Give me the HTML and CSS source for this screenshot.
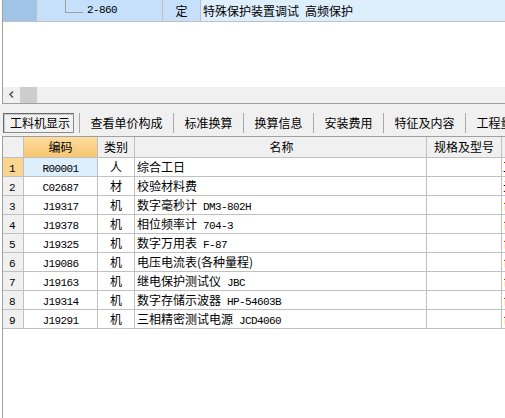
FILE: index.html
```html
<!DOCTYPE html>
<html lang="zh-CN">
<head>
<meta charset="utf-8">
<link rel="stylesheet" href="styles.css">
</head>
<body>
<div class="top">
  <div class="toprow">
    <div class="tc tc0"></div>
    <div class="tc tc1"><span class="tree"></span><span class="lat">2-860</span></div>
    <div class="tc tc2">定</div>
    <div class="tc tc3">特殊保护装置调试<span class="lat"> </span>高频保护</div>
  </div>
  <div class="hscroll">
    <span class="arrow"><svg width="17" height="16" viewBox="0 0 17 16"><polyline points="10,4.5 7,7.5 10,10.5" fill="none" stroke="#555" stroke-width="1.6"/></svg></span>
    <span class="thumb"></span>
  </div>
</div>
<div class="tabs">
  <div class="tab tab-on">工料机显示</div>
  <div class="tab">查看单价构成</div>
  <div class="tab">标准换算</div>
  <div class="tab">换算信息</div>
  <div class="tab">安装费用</div>
  <div class="tab">特征及内容</div>
  <div class="tab">工程量明细</div>
</div>
<div class="grid">
  <div class="row head">
    <div class="c num"></div>
    <div class="c code hot">编码</div>
    <div class="c cat">类别</div>
    <div class="c name ctr">名称</div>
    <div class="c spec">规格及型号</div>
    <div class="c ext">单位</div>
  </div>
  <div class="row sel">
    <div class="c num"><span class="lat">1</span></div>
    <div class="c code"><span class="lat">R00001</span></div>
    <div class="c cat">人</div>
    <div class="c name">综合工日</div>
    <div class="c spec"></div>
    <div class="c ext">工日</div>
  </div>
  <div class="row">
    <div class="c num"><span class="lat">2</span></div>
    <div class="c code"><span class="lat">C02687</span></div>
    <div class="c cat">材</div>
    <div class="c name">校验材料费</div>
    <div class="c spec"></div>
    <div class="c ext">元</div>
  </div>
  <div class="row">
    <div class="c num"><span class="lat">3</span></div>
    <div class="c code"><span class="lat">J19317</span></div>
    <div class="c cat">机</div>
    <div class="c name">数字毫秒计<span class="lat"> DM3-802H</span></div>
    <div class="c spec"></div>
    <div class="c ext">台班</div>
  </div>
  <div class="row">
    <div class="c num"><span class="lat">4</span></div>
    <div class="c code"><span class="lat">J19378</span></div>
    <div class="c cat">机</div>
    <div class="c name">相位频率计<span class="lat"> 704-3</span></div>
    <div class="c spec"></div>
    <div class="c ext">台班</div>
  </div>
  <div class="row">
    <div class="c num"><span class="lat">5</span></div>
    <div class="c code"><span class="lat">J19325</span></div>
    <div class="c cat">机</div>
    <div class="c name">数字万用表<span class="lat"> F-87</span></div>
    <div class="c spec"></div>
    <div class="c ext">台班</div>
  </div>
  <div class="row">
    <div class="c num"><span class="lat">6</span></div>
    <div class="c code"><span class="lat">J19086</span></div>
    <div class="c cat">机</div>
    <div class="c name">电压电流表(各种量程)</div>
    <div class="c spec"></div>
    <div class="c ext">台班</div>
  </div>
  <div class="row">
    <div class="c num"><span class="lat">7</span></div>
    <div class="c code"><span class="lat">J19163</span></div>
    <div class="c cat">机</div>
    <div class="c name">继电保护测试仪<span class="lat"> JBC</span></div>
    <div class="c spec"></div>
    <div class="c ext">台班</div>
  </div>
  <div class="row">
    <div class="c num"><span class="lat">8</span></div>
    <div class="c code"><span class="lat">J19314</span></div>
    <div class="c cat">机</div>
    <div class="c name">数字存储示波器<span class="lat"> HP-54603B</span></div>
    <div class="c spec"></div>
    <div class="c ext">台班</div>
  </div>
  <div class="row">
    <div class="c num"><span class="lat">9</span></div>
    <div class="c code"><span class="lat">J19291</span></div>
    <div class="c cat">机</div>
    <div class="c name">三相精密测试电源<span class="lat"> JCD4060</span></div>
    <div class="c spec"></div>
    <div class="c ext">台班</div>
  </div>
</div>
</body>
</html>
```
FILE: styles.css
```css
* { box-sizing: border-box; }
html, body {
  margin: 0;
  padding: 0;
  width: 505px;
  height: 418px;
  overflow: hidden;
  background: #fff;
  font-family: "Noto Sans CJK SC", "Noto Sans", sans-serif;
  font-size: 12px;
  color: #000;
}
.lat {
  font-family: "Liberation Mono", "DejaVu Sans Mono", monospace;
  font-size: 11px;
  letter-spacing: -0.6px;
}
.top {
  margin-left: 2px;
  height: 104px;
  border-left: 1px solid #a0a0a0;
  border-bottom: 1px solid #a0a0a0;
  display: flex;
  flex-direction: column;
  justify-content: space-between;
}
.toprow {
  display: flex;
  height: 22px;
  border-bottom: 1px solid #c0c0c0;
}
.tc {
  height: 21px;
  line-height: 21px;
  border-right: 1px solid #c0c0c0;
  white-space: nowrap;
}
.tc0 { width: 34px; background: #a0c4e8; }
.tc1 {
  width: 126px;
  background: #c6e0fc;
  display: flex;
  align-items: flex-start;
  padding-left: 28px;
}
.tree {
  width: 18px;
  height: 13px;
  border-left: 1px solid #a0a0a0;
  border-bottom: 1px solid #a0a0a0;
  margin-right: 4px;
}
.tc2 { width: 38px; background: #c6e0fc; text-align: center; }
.tc3 { flex: 1; background: #ddeefc; border-right: none; padding-left: 2px; }
.hscroll {
  height: 16px;
  background: #f0f0f0;
  display: flex;
}
.arrow { width: 17px; height: 16px; display: block; }
.arrow svg { display: block; }
.thumb { width: 17px; height: 16px; background: #cdcdcd; }
.tabs {
  height: 32px;
  background: #f0f0f0;
  display: flex;
  align-items: flex-start;
  padding: 9px 0 0 3px;
  white-space: nowrap;
}
.tab {
  height: 20px;
  line-height: 20px;
  padding: 0 10.5px;
  border-left: 1px solid #a8a8a8;
  flex: none;
}
.tab-on {
  border: 1px solid #6a6a6a;
  border-right-color: #8a8a8a;
  border-bottom-color: #8a8a8a;
  padding: 0 3px 0 6px;
  line-height: 18px;
  margin-right: 5px;
  background: repeating-conic-gradient(#ffffff 0 25%, #e6e6e6 0 50%) 0 0 / 2px 2px;
  box-shadow: inset 1px 1px 0 #c8c8c8;
}
.grid {
  margin-left: 2px;
  height: 282px;
  border-left: 1px solid #a0a0a0;
  border-top: 1px solid #a0a0a0;
  background: #fff;
}
.row {
  display: grid;
  grid-template-columns: 21px 74px 37px 292px 75px 100px;
  height: 19px;
}
.row.head { height: 21px; }
.c {
  border-right: 1px solid #c0c0c0;
  border-bottom: 1px solid #c0c0c0;
  line-height: 18px;
  white-space: nowrap;
  overflow: hidden;
}
.head .c { background: #f0f0f0; line-height: 20px; text-align: center; }
.head .hot { background: linear-gradient(#fcdc9e, #f8c670); }
.num { background: #f0f0f0; padding-left: 6px; }
.sel .num { background: #fad590; }
.sel .code { background: #ddeefc; }
.code, .cat { text-align: center; }
.name { padding-left: 2px; }
.ext { padding-left: 1px; border-right: none; }
```
